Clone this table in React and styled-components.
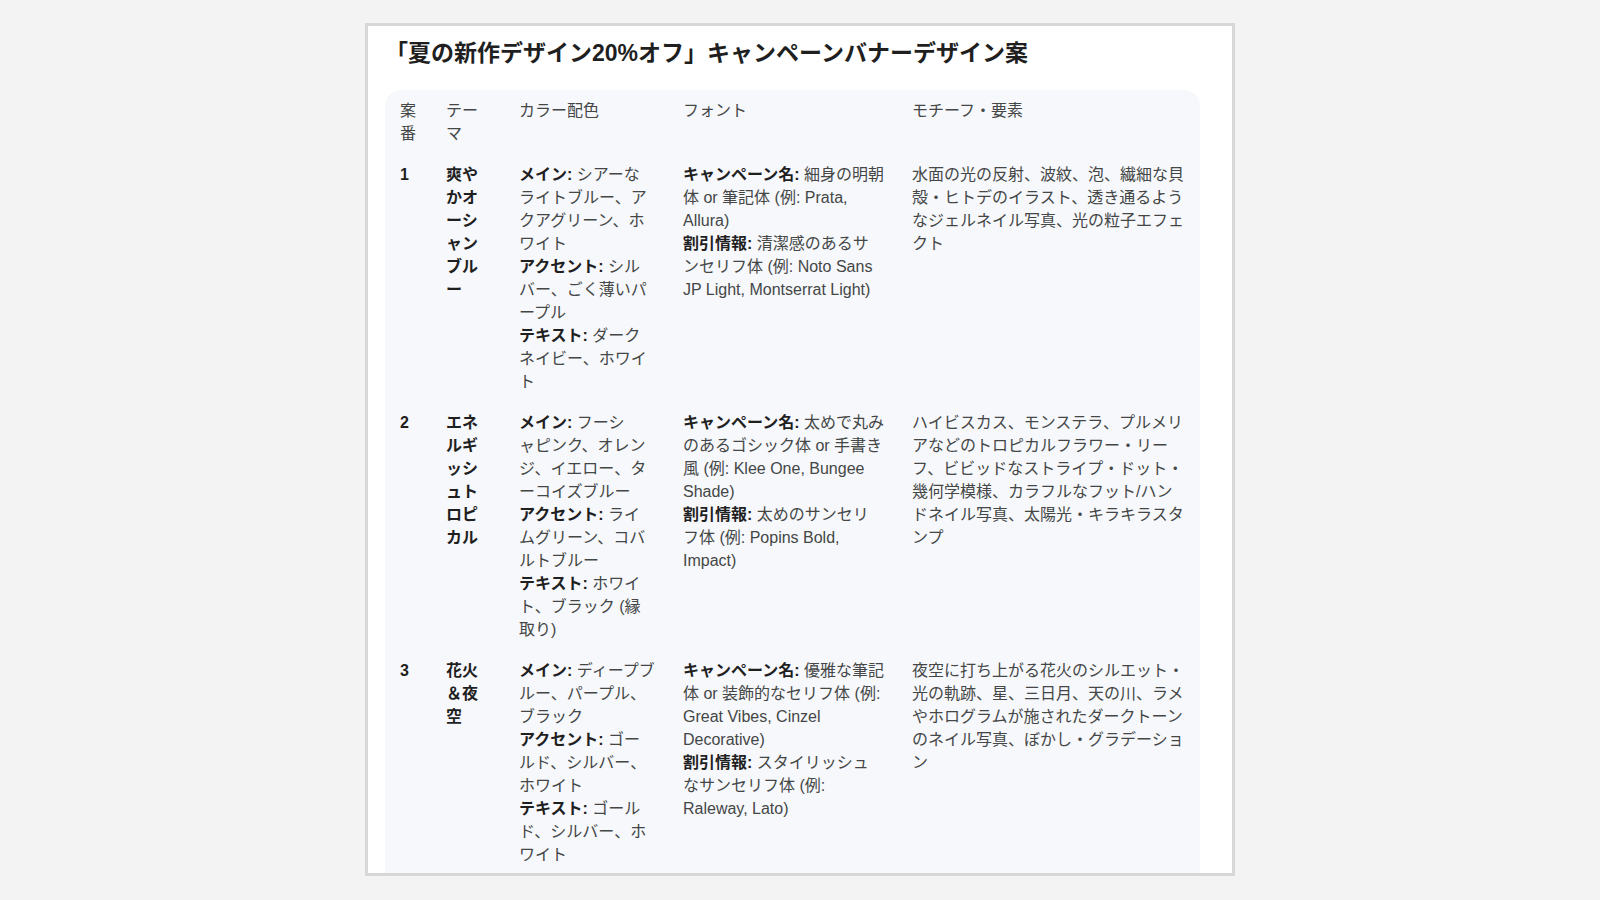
import React from 'react'
import styled, { createGlobalStyle } from 'styled-components'

const GlobalStyle = createGlobalStyle`
    html, body {
        margin: 0;
        background: #f3f3f3;
    }
    body {
        font-family: "Liberation Sans", "Noto Sans CJK JP", sans-serif;
    }
`

const Page = styled.div`
    padding: 23px 0 0 365px;
`

const Frame = styled.div`
    box-sizing: border-box;
    width: 870px;
    height: 853px;
    border: 3px solid #d7d7d7;
    background: #ffffff;
    padding: 0 0 0 17px;
    overflow: hidden;
`

const Title = styled.h2`
    margin: 11px 0 21px 0;
    font-size: 23px;
    line-height: 32px;
    font-weight: 700;
    color: #1f1f1f;
`

const Table = styled.div`
    width: 815px;
    background: #f7f8fc;
    border-radius: 16px;
    padding-bottom: 24px;
`

const Row = styled.div`
    display: grid;
    grid-template-columns: 46px 73px 164px 229px 1fr;
`

const Cell = styled.div`
    padding: 9px 13px 9px 15px;
    font-size: 16px;
    line-height: 23px;
    color: ${p => (p.$strong ? '#1f1f1f' : '#444746')};
    font-weight: ${p => (p.$strong ? 700 : 400)};
`

// keeps the line breaks written in the data
const Line = styled.div`
    white-space: pre-line;
`

const Label = styled.b`
    font-weight: 700;
    color: #1f1f1f;
`

const headers = ['案番', 'テーマ', 'カラー配色', 'フォント', 'モチーフ・要素']

const rows = [
    {
        no: '1',
        theme: '爽やかオーシャンブルー',
        colors: [
            ['メイン:', 'シアーなライトブルー、アクアグリーン、ホワイト'],
            ['アクセント:', 'シルバー、ごく薄いパープル'],
            ['テキスト:', 'ダークネイビー、ホワイト'],
        ],
        fonts: [
            ['キャンペーン名:', '細身の明朝体 or 筆記体 (例: Prata, Allura)'],
            ['割引情報:', '清潔感のあるサ\nンセリフ体 (例: Noto Sans\nJP Light, Montserrat Light)'],
        ],
        motif: '水面の光の反射、波紋、泡、繊細な貝殻・ヒトデのイラスト、透き通るようなジェルネイル写真、光の粒子エフェクト',
    },
    {
        no: '2',
        theme: 'エネルギッシュトロピカル',
        colors: [
            ['メイン:', 'フーシ\nャピンク、オレンジ、イエロー、ターコイズブルー'],
            ['アクセント:', 'ライムグリーン、コバルトブルー'],
            ['テキスト:', 'ホワイト、ブラック (縁取り)'],
        ],
        fonts: [
            ['キャンペーン名:', '太めで丸みのあるゴシック体 or 手書き風 (例: Klee One, Bungee Shade)'],
            ['割引情報:', '太めのサンセリ\nフ体 (例: Popins Bold,\nImpact)'],
        ],
        motif: 'ハイビスカス、モンステラ、プルメリアなどのトロピカルフラワー・リーフ、ビビッドなストライプ・ドット・幾何学模様、カラフルなフット/ハンドネイル写真、太陽光・キラキラスタンプ',
    },
    {
        no: '3',
        theme: '花火＆夜空',
        colors: [
            ['メイン:', 'ディープブルー、パープル、ブラック'],
            ['アクセント:', 'ゴールド、シルバー、ホワイト'],
            ['テキスト:', 'ゴールド、シルバー、ホワイト'],
        ],
        fonts: [
            ['キャンペーン名:', '優雅な筆記体 or 装飾的なセリフ体 (例: Great Vibes, Cinzel Decorative)'],
            ['割引情報:', 'スタイリッシュ\nなサンセリフ体 (例:\nRaleway, Lato)'],
        ],
        motif: '夜空に打ち上がる花火のシルエット・光の軌跡、星、三日月、天の川、ラメやホログラムが施されたダークトーンのネイル写真、ぼかし・グラデーション',
    },
]

const Labeled = ({ items }) => (
    <Cell>
        {items.map(([label, text]) => (
            <Line key={label}>
                <Label>{label}</Label> {text}
            </Line>
        ))}
    </Cell>
)

const App = () => {
    return (
        <Page>
            <GlobalStyle />
            <Frame>
                <Title>「夏の新作デザイン20%オフ」キャンペーンバナーデザイン案</Title>
                <Table>
                    <Row>
                        {headers.map(h => (
                            <Cell key={h}>{h}</Cell>
                        ))}
                    </Row>
                    {rows.map(r => (
                        <Row key={r.no}>
                            <Cell $strong>{r.no}</Cell>
                            <Cell $strong>{r.theme}</Cell>
                            <Labeled items={r.colors} />
                            <Labeled items={r.fonts} />
                            <Cell>{r.motif}</Cell>
                        </Row>
                    ))}
                </Table>
            </Frame>
        </Page>
    )
}

export default App
